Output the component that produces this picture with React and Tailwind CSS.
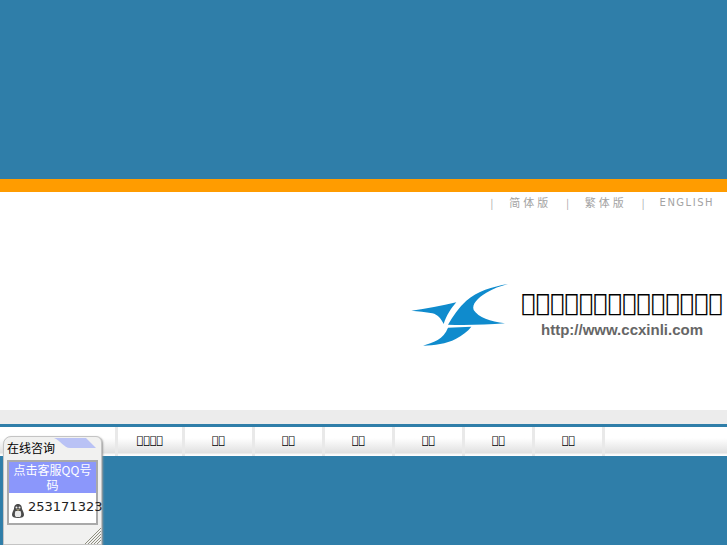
const navItems = ["\uE000\uE000\uE000\uE000", "\uE000\uE000", "\uE000\uE000", "\uE000\uE000", "\uE000\uE000", "\uE000\uE000", "\uE000\uE000"];

const Logo = () => (
  <svg width="115" height="80" viewBox="0 0 345 240" className="shrink-0">
    <path d="M315 30C268 38 222 52 190 80C168 100 150 125 135 152C190 154 250 152 306 148C262 142 226 130 212 108C206 90 224 72 250 56C270 44 292 36 315 30Z" fill="#0f8bcd" />
    <path d="M25 110C70 104 116 96 160 85C145 102 130 124 122 150C114 134 104 122 88 118C68 114 46 112 25 110Z" fill="#0f8bcd" />
    <path d="M205 158C182 159 158 160 135 161C128 178 118 190 104 198C90 206 74 211 60 215C94 214 130 210 158 195C178 184 194 172 205 158Z" fill="#0f8bcd" />
  </svg>
);

const QQPanel = () => (
  <div className="absolute left-[3px] top-[436px] w-[99px] h-[109px] bg-[#f1f1f0] border border-[#c4c4c4] rounded-tl-lg rounded-tr-md shadow-[1px_1px_2px_#9a9a9a] font-['Noto_Sans_CJK_SC',sans-serif]">
    <svg width="44" height="11" viewBox="0 0 44 11" className="absolute left-[50px] top-[1px]">
      <path d="M0 0H32L42 10H16C10 10 6 2 0 0Z" fill="#b9c2f5" />
    </svg>
    <div className="pl-[3px] pt-[1px] h-[23px] text-[12px] leading-[20px] text-black relative">在线咨询</div>
    <div className="mx-[3px] h-[65px] bg-white border-2 border-[#a9a9a9]">
      <div className="bg-[#8b97fb] h-[31px] text-white text-[12px] leading-[15px] text-center">
        <div>点击客服QQ号码</div>
        <div>即时交谈或留言</div>
      </div>
      <div className="flex items-start pl-[2px] pt-[4px]">
        <svg width="14" height="16" viewBox="0 0 14 16" className="mt-[6px] shrink-0">
          <path d="M7 1C4 1 3 3.500 3 6C2 8 1 10 1 12C1 14 3 15 7 15C11 15 13 14 13 12C13 10 12 8 11 6C11 3.500 10 1 7 1Z" fill="#4a4a4a" />
          <path d="M4.500 8C3.500 10 3.500 13 5 14H9C10.500 13 10.500 10 9.500 8Z" fill="#e8e8e8" />
          <circle cx="5.500" cy="4.500" r="1" fill="#eee" />
          <circle cx="8.500" cy="4.500" r="1" fill="#eee" />
          <path d="M5 6.500H9L7 7.800Z" fill="#d8c890" />
        </svg>
        <span className="ml-[3px] text-[13px] leading-[20px] text-[#222] font-['DejaVu_Sans',sans-serif]">253171323</span>
      </div>
    </div>
    <svg width="16" height="16" viewBox="0 0 16 16" className="absolute right-0 bottom-0" stroke="#8f8f80" strokeWidth="1">
      <path d="M16 0L0 16M16 3L3 16M16 6L6 16M16 9L9 16M16 12L12 16" />
    </svg>
  </div>
);

export default function App() {
  return (
    <div className="relative h-[545px] overflow-hidden bg-[#2f7ea9] font-['DejaVu_Sans',sans-serif]">
      <div className="h-[179px]" />
      <div className="h-[13px] bg-[#ff9c00]" />
      <div className="h-[218px] bg-white flex flex-col">
        <div className="flex justify-end items-center h-[20px] pr-[13px] text-[#a3a3a3] text-[10px] font-['Noto_Sans_CJK_SC',sans-serif]">
          <span className="mr-[16px]">|</span>
          <span className="tracking-[3px] text-[11px]">简体版</span>
          <span className="ml-[15px] mr-[16px]">|</span>
          <span className="tracking-[3px] text-[11px]">繁体版</span>
          <span className="ml-[15px] mr-[15px]">|</span>
          <span className="tracking-[1.500px] font-['DejaVu_Sans',sans-serif]">ENGLISH</span>
        </div>
        <div className="flex justify-end items-center mt-[62px] pr-[4px]">
          <Logo />
          <div className="ml-[3px] flex flex-col items-end">
            <div className="text-[24px] leading-[30px] text-black tracking-[0px] whitespace-nowrap">{"\uE000".repeat(14)}</div>
            <div className="mr-[20px] mt-[2px] text-[15px] leading-[20px] font-bold text-[#666] font-['Liberation_Sans',sans-serif]">http://www.ccxinli.com</div>
          </div>
        </div>
      </div>
      <div className="h-[14px] bg-[#ececec]" />
      <div className="h-[3px]" />
      <div className="h-[29px] pl-[115px] flex bg-[linear-gradient(#fff_0,#fff_11px,#e0e0e0_26px,#f6f6f6_27px,#fff_29px)]">
        <div className="w-[70px] relative flex items-center justify-center text-[11px] text-black border-r-[3px] border-l-[3px] border-[#e9e9e9] -ml-[0px]">
          {navItems[0]}
        </div>
        {navItems.slice(1).map((item, i) => (
          <div key={i} className="w-[70px] flex items-center justify-center text-[11px] text-black border-r-[3px] border-[#e9e9e9]">
            {item}
          </div>
        ))}
      </div>
      <QQPanel />
    </div>
  );
}
